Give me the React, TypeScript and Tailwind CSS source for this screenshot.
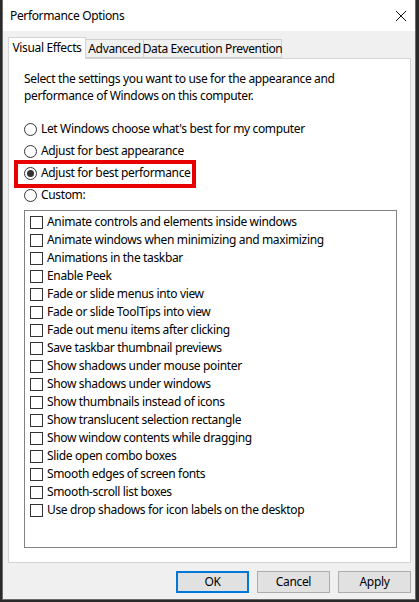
import React from 'react';

const effects = [
  'Animate controls and elements inside windows',
  'Animate windows when minimizing and maximizing',
  'Animations in the taskbar',
  'Enable Peek',
  'Fade or slide menus into view',
  'Fade or slide ToolTips into view',
  'Fade out menu items after clicking',
  'Save taskbar thumbnail previews',
  'Show shadows under mouse pointer',
  'Show shadows under windows',
  'Show thumbnails instead of icons',
  'Show translucent selection rectangle',
  'Show window contents while dragging',
  'Slide open combo boxes',
  'Smooth edges of screen fonts',
  'Smooth-scroll list boxes',
  'Use drop shadows for icon labels on the desktop',
];

const Radio: React.FC<{ label: string; checked?: boolean; highlight?: boolean }> = ({
  label,
  checked,
  highlight,
}) => (
  <div className="relative flex items-center h-[22px]">
    <span className="w-[13px] h-[13px] rounded-full border border-[#333] bg-white flex items-center justify-center shrink-0">
      {checked && <span className="w-[7px] h-[7px] rounded-full bg-[#333]" />}
    </span>
    <span className="ml-[4px] text-[#000] whitespace-nowrap">{label}</span>
    {highlight && (
      <div className="absolute left-[-10px] top-[-2px] w-[182px] h-[28px] border-[4px] border-[#e60000]" />
    )}
  </div>
);

const Button: React.FC<{ label: string; primary?: boolean }> = ({ label, primary }) => (
  <button
    className={
      'w-[73px] h-[22px] bg-[#e1e1e1] text-[12px] text-black ' +
      (primary ? 'border-2 border-[#0078d7]' : 'border border-[#adadad]')
    }
  >
    {label}
  </button>
);

export default function App() {
  return (
    <div
      className="w-[419px] h-[602px] bg-[#2a2a2a] text-[12px] leading-[16px] tracking-[-0.35px]"
      style={{ fontFamily: '"Noto Sans", "Liberation Sans", sans-serif' }}
    >
      <div className="ml-[2px] w-[414px] h-[600px] bg-[#f0f0f0] border-x border-b border-[#6b6b6b] flex flex-col">
        {/* title bar */}
        <div className="h-[31px] bg-white flex items-center justify-between pl-[7px] pr-[7px]">
          <span className="text-[12px] text-black">Performance Options</span>
          <svg width="12" height="12" viewBox="0 0 12 12" className="mr-[1px]">
            <path d="M1 1 L11 11 M11 1 L1 11" stroke="#111" strokeWidth="1" />
          </svg>
        </div>

        {/* tabs */}
        <div className="flex items-end pl-[5px] mt-[6px] h-[21px] relative z-10 whitespace-nowrap">
          <div className="h-[22px] w-[78px] bg-white border border-b-0 border-[#d4d4d4] flex items-start pt-[2px] justify-center -mb-[1px]">
            Visual Effects
          </div>
          <div className="h-[19px] w-[58px] bg-[#f0f0f0] border border-l-0 border-[#cfcfcf] flex items-center justify-center">
            Advanced
          </div>
          <div className="h-[19px] w-[138px] bg-[#f0f0f0] border border-l-0 border-[#cfcfcf] flex items-center justify-center">
            Data Execution Prevention
          </div>
        </div>

        {/* panel */}
        <div className="ml-[5px] w-[403px] h-[505px] bg-white border border-[#d4d4d4] pl-[15px] pt-[11px]">
          <p className="w-[360px] leading-[17px]">
            Select the settings you want to use for the appearance and performance of Windows on this computer.
          </p>
          <div className="mt-[14px] flex flex-col">
            <Radio label="Let Windows choose what's best for my computer" />
            <Radio label="Adjust for best appearance" />
            <Radio label="Adjust for best performance" checked highlight />
            <Radio label="Custom:" />
          </div>
          <div className="mt-[4px] w-[373px] h-[338px] border border-[#828282] pl-[5px] pt-[2px] flex flex-col">
            {effects.map(e => (
              <div key={e} className="flex items-center h-[18px]">
                <span className="w-[13px] h-[13px] border border-[#333] bg-white shrink-0" />
                <span className="ml-[4px] whitespace-nowrap">{e}</span>
              </div>
            ))}
          </div>
        </div>

        {/* buttons */}
        <div className="flex justify-end gap-[8px] pr-[4px] mt-[8px]">
          <Button label="OK" primary />
          <Button label="Cancel" />
          <Button label="Apply" />
        </div>
      </div>
    </div>
  );
}
